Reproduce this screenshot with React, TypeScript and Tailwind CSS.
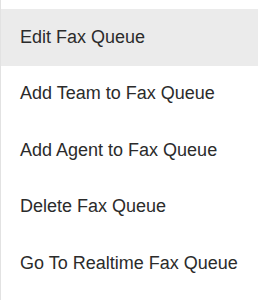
const items = [
  "Edit Fax Queue",
  "Add Team to Fax Queue",
  "Add Agent to Fax Queue",
  "Delete Fax Queue",
  "Go To Realtime Fax Queue",
]

export default function App() {
  return (
    <div className="w-[258px] h-[300px] bg-white overflow-hidden">
      <ul className="h-full pt-[9px] border-l border-[#e2e2e2] font-['Liberation_Sans',Arial,sans-serif] text-[18px] text-[#2b2b2b]">
        {items.map((item, i) => (
          <li
            key={item}
            className={`h-[56.5px] flex items-center pl-[19px] whitespace-nowrap ${i === 0 ? "bg-[#ebebeb]" : ""}`}
          >
            {item}
          </li>
        ))}
      </ul>
    </div>
  )
}
